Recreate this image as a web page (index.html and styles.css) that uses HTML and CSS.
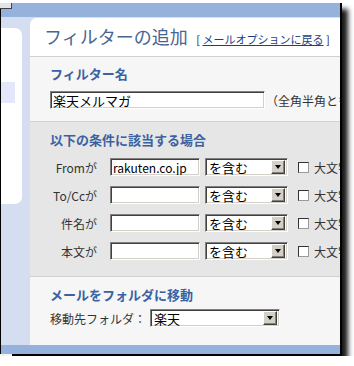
FILE: index.html
```html
<!DOCTYPE html>
<html lang="ja">
<head>
  <meta charset="UTF-8" />
  <meta name="viewport" content="width=device-width, initial-scale=1" />
  <title>フィルターの追加</title>
  <link rel="stylesheet" href="styles.css">
</head>
<body>

  <div class="shot">
    <span class="tab-top"></span>
    <span class="tab-bottom"></span>

    <div class="bar"></div>

    <div class="layout">

      <!-- left menu -->
      <div class="sidebar">
        <div class="nav">
          <div class="nav-item"></div>
        </div>
      </div>

      <!-- filter form -->
      <div class="main">
        <div class="page-head">
          <h1>フィルターの追加</h1>
          <span class="back">[ <a href="#">メールオプションに戻る</a> ]</span>
        </div>

        <div class="section">
          <h3>フィルター名</h3>
          <div class="field">
            <input type="text" class="text name-input" value="楽天メルマガ" />
            <span class="note">（全角半角とも</span>
          </div>
        </div>

        <div class="section gray">
          <h3>以下の条件に該当する場合</h3>
          <div class="conds">
            <div class="cond">
              <label class="cond-label">Fromが</label>
              <input type="text" class="text cond-input" value="rakuten.co.jp" />
              <div class="select cond-select"><span>を含む</span><b class="drop"></b></div>
              <span class="check"></span>
              <span class="case">大文字</span>
            </div>
            <div class="cond">
              <label class="cond-label">To/Ccが</label>
              <input type="text" class="text cond-input" value="" />
              <div class="select cond-select"><span>を含む</span><b class="drop"></b></div>
              <span class="check"></span>
              <span class="case">大文字</span>
            </div>
            <div class="cond">
              <label class="cond-label">件名が</label>
              <input type="text" class="text cond-input" value="" />
              <div class="select cond-select"><span>を含む</span><b class="drop"></b></div>
              <span class="check"></span>
              <span class="case">大文字</span>
            </div>
            <div class="cond">
              <label class="cond-label">本文が</label>
              <input type="text" class="text cond-input" value="" />
              <div class="select cond-select"><span>を含む</span><b class="drop"></b></div>
              <span class="check"></span>
              <span class="case">大文字</span>
            </div>
          </div>
        </div>

        <div class="section last">
          <h3>メールをフォルダに移動</h3>
          <div class="field folder-row">
            <label>移動先フォルダ：</label>
            <div class="select folder-select"><span>楽天</span><b class="drop"></b></div>
          </div>
        </div>
      </div>

    </div>

    <div class="bar bottom"></div>
  </div>

</body>
</html>
```

FILE: styles.css
```css
* {
  box-sizing: border-box;
}

body {
  margin: 0;
  background: #fff;
  font-family: "Noto Sans CJK JP", "Noto Sans", sans-serif;
  font-size: 12px;
  color: #333;
}

.shot {
  position: relative;
  width: 342px;
  margin-top: 3px;
  border-left: 1px solid #000;
  border-right: 2px solid #000;
  border-bottom: 2px solid #000;
  box-shadow: 6px 6px 5px rgba(0,0,0,0.9);
}

.tab-top {
  position: absolute;
  left: -1px;
  top: 0;
  width: 12px;
  height: 6px;
  background: #e4e4e4;
  border-right: 1px solid #404040;
  border-bottom: 1px solid #404040;
}

.tab-bottom {
  position: absolute;
  left: -1px;
  bottom: -3px;
  width: 12px;
  height: 3px;
  background: #f4f4f4;
  border-bottom: 1px solid #999;
}

.bar {
  height: 14px;
  background: #95b2dd;
}

.bar.bottom {
  height: 9px;
}

.layout {
  display: flex;
  height: 328px;
  background: #d4def0;
}

.sidebar {
  flex-shrink: 0;
  width: 29px;
  padding-top: 11px;
}

.nav {
  width: 21px;
  height: 176px;
  background: #fff;
  border-radius: 0 7px 7px 0;
  padding-top: 54px;
}

.nav-item {
  width: 14px;
  height: 21px;
  background: #e4e7fa;
}

.main {
  flex: none;
  width: 310px;
  display: flex;
  flex-direction: column;
  margin-top: 1px;
  background: #f6f6f6;
  border-radius: 7px 0 0 0;
  overflow: hidden;
  white-space: nowrap;
}

.page-head {
  height: 39px;
  padding: 6px 0 0 14px;
  background: #fff;
  border-bottom: 1px solid #d2d2d2;
}

.page-head h1 {
  display: inline;
  margin: 0;
  font-size: 18px;
  font-weight: normal;
  line-height: 24px;
  color: #486692;
}

.back {
  margin-left: 6px;
  font-size: 11px;
  color: #222;
}

.back a {
  color: #1c3f86;
}

.section {
  padding: 9px 0 12px 20px;
  border-bottom: 1px solid #d2d2d2;
}

.section.gray {
  background: #e6e6e6;
  padding: 10px 0 16px 20px;
}

.section.last {
  flex: 1;
  border-bottom: none;
  padding-top: 10px;
}

.section h3 {
  margin: 0;
  font-size: 13px;
  line-height: 16px;
  color: #3b62a0;
}

.field {
  display: flex;
  align-items: center;
  margin-top: 9px;
}

.field > *,
.cond > * {
  flex-shrink: 0;
}

.text {
  height: 18px;
  padding: 0 2px;
  border: 1px solid;
  border-color: #808080 #fff #fff #808080;
  box-shadow: inset 1px 1px 0 #404040, inset -1px -1px 0 #d4d0c8;
  background: #fff;
  font-family: inherit;
  font-size: 13px;
  color: #000;
  outline: none;
}

.name-input {
  width: 215px;
}

.note {
  margin-left: 1px;
  font-size: 12px;
}

.conds {
  display: flex;
  flex-direction: column;
  gap: 10px;
  margin-top: 10px;
}

.cond {
  display: flex;
  align-items: center;
  height: 18px;
}

.cond-label {
  width: 47px;
  margin-right: 13px;
  text-align: right;
}

.cond-input {
  width: 90px;
  margin-right: 5px;
  font-size: 12px;
}

.select {
  display: flex;
  align-items: center;
  justify-content: space-between;
  height: 18px;
  padding: 0 2px 0 3px;
  border: 1px solid;
  border-color: #808080 #fff #fff #808080;
  box-shadow: inset 1px 1px 0 #404040, inset -1px -1px 0 #d4d0c8;
  background: #fff;
  font-size: 13px;
  color: #000;
}

.cond-select {
  width: 83px;
  margin-right: 10px;
}

.drop {
  position: relative;
  flex-shrink: 0;
  width: 14px;
  height: 14px;
  background: #d4d0c8;
  border: 1px solid;
  border-color: #fff #404040 #404040 #fff;
  box-shadow: inset -1px -1px 0 #808080;
}

.drop::after {
  content: "";
  position: absolute;
  left: 3px;
  top: 4px;
  border-left: 3px solid transparent;
  border-right: 3px solid transparent;
  border-top: 4px solid #000;
}

.check {
  width: 11px;
  height: 11px;
  margin-right: 5px;
  background: #fff;
  border: 1px solid #333;
  border-right-color: #999;
  border-bottom-color: #999;
}

.case {
  font-size: 12px;
}

.folder-row {
  margin-top: 6px;
}

.folder-select {
  width: 130px;
  margin-left: 4px;
}
```
